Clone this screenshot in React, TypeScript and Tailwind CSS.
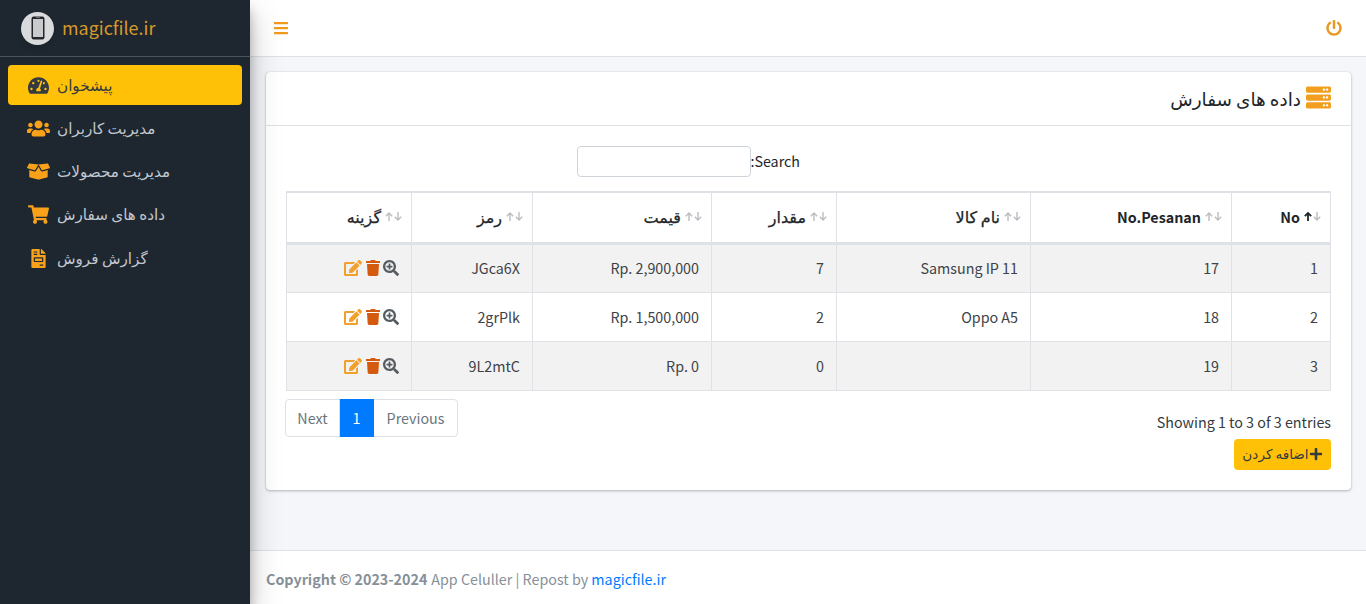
import React from "react";
import { FaTachometerAlt, FaUsers, FaBoxOpen, FaShoppingCart, FaFileInvoice, FaBars, FaPowerOff, FaServer, FaEdit, FaTrash, FaSearchPlus, FaPlus } from "react-icons/fa";

const font = "font-['Noto_Sans_CJK_SC','DejaVu_Sans',sans-serif]";

function Nav({ icon, label, active }: { icon: React.ReactNode; label: string; active?: boolean }) {
  return (
    <div className={`flex h-10 w-[234px] items-center rounded pl-[18px] mb-[3.25px] ${active ? "bg-[#ffc107] text-[#343a40]" : "text-[#c2c7d0]"}`}>
      <span className={`flex w-[24px] shrink-0 justify-center ${active ? "text-[#343a40]" : "text-[#f9a11b]"}`}>{icon}</span>
      <span className="-mt-[2px] ml-[7px] text-[15.2px]">{label}</span>
    </div>
  );
}

function Sort({ up }: { up?: boolean }) {
  return (
    <span dir="ltr" className="absolute right-[9px] top-[19px] flex gap-[1px]">
      <svg width="8" height="9" viewBox="0 0 8 9" fill="none" className={up ? "text-[#212529]" : "text-[#babec2]"} stroke="currentColor" strokeWidth={up ? 1.8 : 1.4}>
        <path d="M4 9V1M0.8 4.2L4 1L7.2 4.2" />
      </svg>
      <svg width="8" height="9" viewBox="0 0 8 9" fill="none" className="text-[#babec2]" stroke="currentColor" strokeWidth="1.4">
        <path d="M4 0V8M0.8 4.8L4 8L7.2 4.8" />
      </svg>
    </span>
  );
}

const cols = [
  { t: "No", w: "w-[99px]", b: true, up: true },
  { t: "No.Pesanan", w: "w-[201px]", b: true },
  { t: "نام کالا", w: "w-[194px]" },
  { t: "مقدار", w: "w-[125px]" },
  { t: "قیمت", w: "w-[179px]" },
  { t: "رمز", w: "w-[121px]" },
  { t: "گزینه", w: "w-[125px]" },
];

const rows = [
  ["1", "17", "Samsung IP 11", "7", "Rp. 2,900,000", "JGca6X"],
  ["2", "18", "Oppo A5", "2", "Rp. 1,500,000", "2grPlk"],
  ["3", "19", "", "0", "Rp. 0", "9L2mtC"],
];

export default function App() {
  return (
    <div className={`flex h-[604px] w-[1366px] overflow-hidden bg-[#f4f6f9] text-[14.3px] text-[#212529] ${font}`}>
      <aside className="z-10 h-full w-[250px] shrink-0 bg-[#1e2730] shadow-[0_14px_28px_rgba(0,0,0,0.25),0_10px_10px_rgba(0,0,0,0.22)]">
        <div className="flex h-[57px] items-center border-b border-[#4b545c] pl-[21px]">
          <span className="flex h-[33px] w-[33px] items-center justify-center rounded-full bg-[#d9dadb] shadow-md">
            <svg width="14" height="24" viewBox="0 0 14 24">
              <rect x="0.5" y="0.5" width="13" height="23" rx="2.2" fill="#23272b" />
              <rect x="2" y="3" width="10" height="18" fill="#c8cacc" />
              <rect x="5" y="1.3" width="4" height="0.7" fill="#8b8f93" />
            </svg>
          </span>
          <span className="-mt-[2px] ml-2 text-[17.9px] text-[#d8992a]">magicfile.ir</span>
        </div>
        <nav className="pl-2 pt-2">
          <Nav active icon={<FaTachometerAlt size={21} />} label="پیشخوان" />
          <Nav icon={<FaUsers size={23} />} label="مدیریت کاربران" />
          <Nav icon={<FaBoxOpen size={23} />} label="مدیریت محصولات" />
          <Nav icon={<FaShoppingCart size={21} />} label="داده های سفارش" />
          <Nav icon={<FaFileInvoice size={19} />} label="گزارش فروش" />
        </nav>
      </aside>

      <div className="flex min-w-0 flex-1 flex-col">
        <header className="flex h-[57px] shrink-0 items-center justify-between border-b border-[#dee2e6] bg-white pl-[23px] pr-[24px]">
          <FaBars className="text-[16px] text-[#ef9a1c]" />
          <FaPowerOff className="text-[16px] text-[#e89a25]" />
        </header>

        <main className="flex-1 pl-4 pr-[15px] pt-[15px]">
          <div className="h-[418px] rounded bg-white shadow-[0_0_1px_rgba(0,0,0,0.2),0_1px_3px_rgba(0,0,0,0.25)]">
            <div dir="rtl" className="flex h-[54px] items-center gap-[5px] border-b border-[#dee2e6] pr-5">
              <FaServer className="-mt-[3px] text-[25px] text-[#f29f1f]" />
              <h3 className="text-[18.4px] font-normal text-[#212529]">داده های سفارش</h3>
            </div>
            <div dir="rtl" className="px-5 pt-5">
              <div className="flex h-[31px] items-center pr-[531px]">
                <label className="-mt-[2px] -ml-px text-[#212529]">Search:</label>
                <span className="h-[31px] w-[174px] rounded border border-[#ced4da] bg-white" />
              </div>
              <table className="mt-[14px] w-[1044px] table-fixed border-collapse border border-[#dee2e6]">
                <thead>
                  <tr>
                    {cols.map((c, i) => (
                      <th key={i} className={`relative h-[51px] border border-t-2 border-b-[3px] border-[#dee2e6] pb-[2px] pr-[30px] text-right align-middle ${c.b ? "text-[14.3px] font-bold" : "text-[16px] font-normal [-webkit-text-stroke:0.25px]"} ${c.w}`}>
                        {c.t}
                        <Sort up={c.up} />
                      </th>
                    ))}
                  </tr>
                </thead>
                <tbody>
                  {rows.map((r, i) => (
                    <tr key={i} className={i % 2 === 0 ? "bg-[#f2f2f2]" : "bg-white"}>
                      {r.map((v, j) => (
                        <td key={j} className="h-[49px] border border-[#dee2e6] px-3 text-right text-[#3d4248]" dir="ltr">{v}</td>
                      ))}
                      <td className="h-[49px] border border-[#dee2e6] pr-3">
                        <div className="flex items-center text-[16px]" dir="rtl">
                          <FaSearchPlus className="ml-[2px] text-[#555b61]" />
                          <FaTrash className="ml-[3px] text-[#d35a0e]" />
                          <FaEdit size={18} className="text-[#f2a02c]" />
                        </div>
                      </td>
                    </tr>
                  ))}
                </tbody>
              </table>
              <div className="mt-2 flex items-start justify-between">
                <div className="flex flex-col items-start pt-[12px]">
                  <div className="text-[#343a40]" dir="ltr">Showing 1 to 3 of 3 entries</div>
                  <div className="mt-[7px] flex h-[31px] w-[97px] items-center justify-center rounded bg-[#ffc107] text-[13.6px] text-[#343a40]">
                    <FaPlus className="text-[14px]" />
                    <span className="-mt-[2px]">اضافه کردن</span>
                  </div>
                </div>
                <div className="-ml-px flex h-[38px] items-stretch" dir="rtl">
                  <span className="flex w-[85px] items-center justify-center rounded-r border border-[#dee2e6] text-[#6c757d]">Previous</span>
                  <span className="-mx-px flex w-[35px] items-center justify-center bg-[#007bff] text-white">1</span>
                  <span className="flex w-[55px] items-center justify-center rounded-l border border-[#dee2e6] text-[#6c757d]">Next</span>
                </div>
              </div>
            </div>
          </div>
        </main>

        <footer className="flex h-[54px] shrink-0 items-center border-t border-[#dee2e6] bg-white pl-4 pt-[2px] text-[#869099]">
          <b className="font-bold">Copyright © 2023-2024</b>
          <span className="ml-1">App Celuller | Repost by <span className="text-[#007bff]">magicfile.ir</span></span>
        </footer>
      </div>
    </div>
  );
}
